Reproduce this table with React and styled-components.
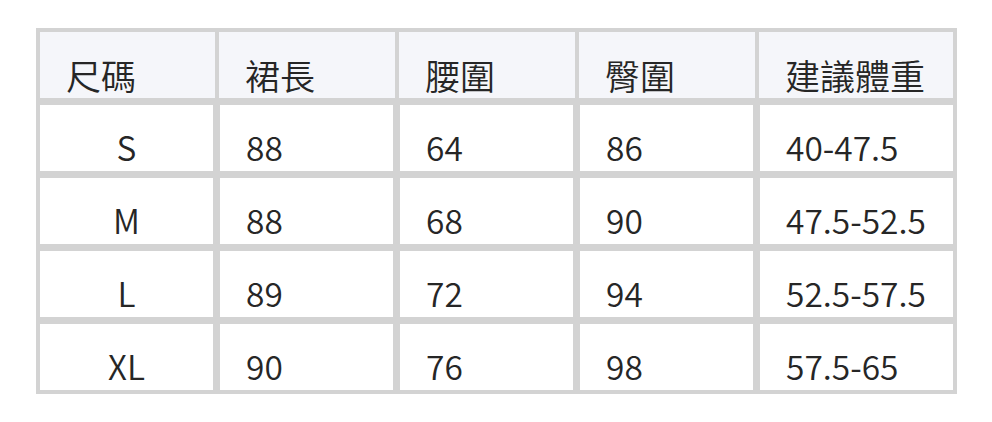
import styled, { createGlobalStyle } from 'styled-components'

const GlobalStyle = createGlobalStyle`
  html, body {
    margin: 0;
    padding: 0;
    background: #fff;
  }
  body {
    font-family: "Noto Sans CJK TC", "Noto Sans", sans-serif;
    color: #262626;
  }
`

const Page = styled.div`
  padding: 28px 0 0 36px;
`

const Table = styled.div`
  display: flex;
  flex-direction: column;
  gap: 7px;
  width: 913px;
  border: 4px solid #d3d3d3;
  background-color: #d3d3d3;
`

const Row = styled.div`
  display: grid;
  grid-template-columns: ${props => props.head ? '175px 176px 176px 176px 194px' : '173px 173px 173px 173px 193px'};
  column-gap: ${props => props.head ? 4 : 7}px;
  height: 66px;
`

const Cell = styled.div`
  display: flex;
  align-items: flex-end;
  justify-content: ${props => props.center ? 'center' : 'flex-start'};
  padding: 0 0 ${props => props.head ? 6 : 8}px ${props => props.center ? 0 : 26}px;
  background-color: ${props => props.head ? '#f5f6fa' : '#fff'};
  font-size: ${props => props.head ? 35 : 33.5}px;
  font-weight: 350;
  line-height: 1;
  white-space: nowrap;
`

const headers = ['尺碼', '裙長', '腰圍', '臀圍', '建議體重']

const rows = [
  ['S', '88', '64', '86', '40-47.5'],
  ['M', '88', '68', '90', '47.5-52.5'],
  ['L', '89', '72', '94', '52.5-57.5'],
  ['XL', '90', '76', '98', '57.5-65'],
]

const App = () => {
  return (
    <Page>
      <GlobalStyle />
      <Table>
        <Row head>
          {headers.map((h) => (
            <Cell head key={h}>{h}</Cell>
          ))}
        </Row>
        {rows.map((row) => (
          <Row key={row[0]}>
            {row.map((value, i) => (
              <Cell key={i} center={i === 0}>{value}</Cell>
            ))}
          </Row>
        ))}
      </Table>
    </Page>
  )
}

export default App
